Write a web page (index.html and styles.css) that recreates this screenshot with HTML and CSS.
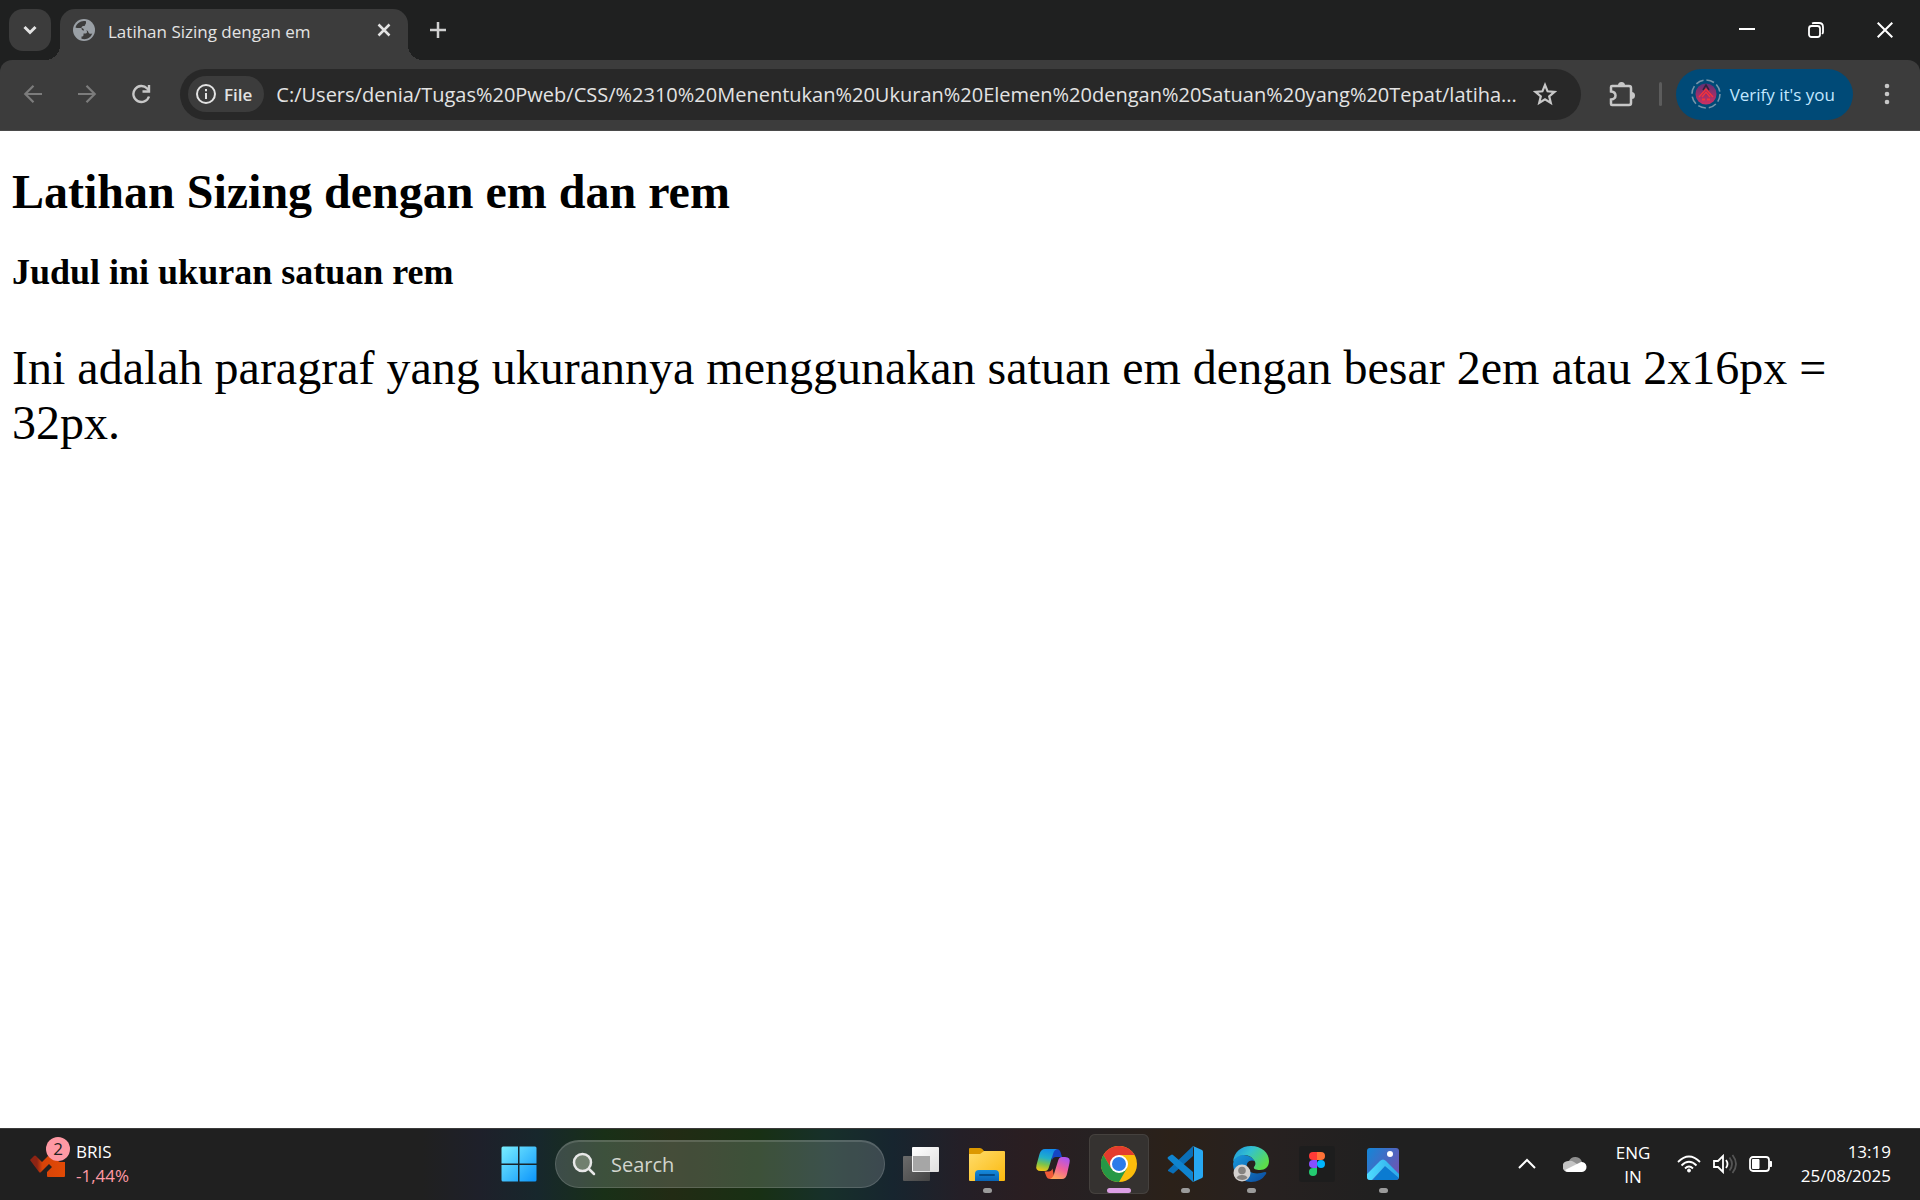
FILE: index.html
```html
<!DOCTYPE html>
<html lang="id">
<head>
<meta charset="utf-8">
<title>Latihan Sizing dengan em</title>
<link rel="stylesheet" href="styles.css">
</head>
<body>
<header class="browser">
  <div class="tabstrip">
    <button class="tab-search" aria-label="Search tabs"><svg width="42" height="42" viewBox="0 0 42 42" fill="none" stroke="#e3e3e3" stroke-width="3"><path d="M15.500 18l5.500 5.500 5.500-5.500"/></svg></button>
    <div class="tab">
      <svg class="tab-icon" width="22" height="22" viewBox="0 0 22 22"><circle cx="11" cy="11" r="11" fill="#9aa0a6"/><path fill="#3c3c3c" d="M13 2.300C8 1 3.500 4.500 2.500 8.500L4 9h4.500c1.500 0 2.500 1 2.500 2.500h1.500c1 0 1.500.5 1.500 1.500s-1 1.500-2 1.500h-1.500v1.500c0 1-1 1.500-2 1.500v2.200c5 1.500 9.500-1 10.800-5.500-1 .8-3.300.8-3.800-.7-.5-1.200-.5-2-2-2h-3c-1.500 0-2-1-2-2.500s1-2 2.500-2 1-2 2-2.500z"/></svg>
      <span class="tab-title">Latihan Sizing dengan em</span>
      <button class="icon-btn tab-close" aria-label="Close tab"><svg width="16" height="16" viewBox="0 0 16 16" stroke="#e3e3e3" stroke-width="2.500"><path d="M2.500 2.500l11 11M13.500 2.500l-11 11"/></svg></button>
    </div>
    <button class="icon-btn new-tab" aria-label="New tab"><svg width="16" height="16" viewBox="0 0 16 16" stroke="#d0d0d0" stroke-width="2.500"><path d="M8 0v16M0 8h16"/></svg></button>
    <div class="window-controls">
      <button class="icon-btn" aria-label="Minimize"><svg width="16" height="16" viewBox="0 0 16 16" stroke="#fff" stroke-width="2"><path d="M0 7h16"/></svg></button>
      <button class="icon-btn" aria-label="Restore"><svg width="16" height="16" viewBox="0 0 16 16" fill="none" stroke="#fff" stroke-width="1.800"><rect x="1" y="4" width="11" height="11" rx="2.500"/><path d="M4 1.500Q5 1 6 1h5q4 0 4 4v5q0 1-.8 2"/></svg></button>
      <button class="icon-btn" aria-label="Close"><svg width="16" height="16" viewBox="0 0 16 16" stroke="#fff" stroke-width="2"><path d="M.7.700l14.600 14.600M15.300.700L.7 15.300"/></svg></button>
    </div>
  </div>
  <div class="toolbar">
    <button class="icon-btn nav" aria-label="Back"><svg width="20" height="20" viewBox="0 0 20 20" fill="none" stroke="#7c7c7c" stroke-width="2.200"><path d="M19 10H3M10.500 1.800L2.300 10l8.200 8.200"/></svg></button>
    <button class="icon-btn nav" aria-label="Forward"><svg width="20" height="20" viewBox="0 0 20 20" fill="none" stroke="#7c7c7c" stroke-width="2.200"><path d="M1 10h16M9.500 1.800l8.200 8.200-8.200 8.200"/></svg></button>
    <button class="icon-btn nav" aria-label="Reload"><svg width="20" height="20" viewBox="0 0 20 20" fill="none" stroke="#c7c7c7" stroke-width="2.400"><path d="M18 12.500A8 8 0 1 1 16.200 4.500L17.500 6"/><path d="M18 1v6.500h-6.500"/></svg></button>
    <div class="omnibox">
      <button class="site-chip"><svg width="20" height="20" viewBox="0 0 20 20" fill="none" stroke="#e3e3e3" stroke-width="2"><circle cx="10" cy="10" r="9"/><path d="M10 9v6M10 5v2.200"/></svg>File</button>
      <input class="url" type="text" aria-label="Address" value="C:/Users/denia/Tugas%20Pweb/CSS/%2310%20Menentukan%20Ukuran%20Elemen%20dengan%20Satuan%20yang%20Tepat/latiha...">
      <button class="icon-btn star" aria-label="Bookmark"><svg width="24" height="24" viewBox="0 0 24 24" fill="none" stroke="#c7c7c7" stroke-width="2.200"><path d="M12 3l2.600 6.300 6.800.6-5.200 4.400 1.600 6.700L12 17.400 6.200 21l1.600-6.700-5.200-4.400 6.800-.6z"/></svg></button>
    </div>
    <button class="icon-btn extensions" aria-label="Extensions"><svg width="26" height="26" viewBox="0 0 26 26"><path d="M3 5h17q2 0 2 2v15q0 2-2 2H3q-1 0-1-1v-4.500q4.500-.5 4.500-4T2 10.500V6q0-1 1-1z" fill="none" stroke="#c7c7c7" stroke-width="2.500"/><path fill="#c7c7c7" d="M9 4.500a3.500 3.500 0 0 1 7 0zM22.500 11a3.500 3.500 0 0 1 0 7z"/></svg></button>
    <span class="divider"></span>
    <button class="profile"><svg width="30" height="30" viewBox="0 0 30 30"><defs><linearGradient id="av" x1="0" y1="0" x2="0" y2="1"><stop offset="0" stop-color="#5f2f74"/><stop offset="1" stop-color="#cc3063"/></linearGradient></defs><circle cx="15" cy="15" r="14" fill="none" stroke="#7495ab" stroke-width="1.600" stroke-dasharray="8 3"/><circle cx="15" cy="15" r="10.500" fill="url(#av)"/><path d="M12 11l3-5 3 5" fill="none" stroke="#30213c" stroke-width="1.500"/><path d="M8 18l7-8 7 8M11 18l4-5 4 5" fill="none" stroke="#f4333b" stroke-width="1.400"/><path d="M11 20.500h3M16 20.500h3" stroke="#f4333b" stroke-width="2"/></svg>Verify it's you</button>
    <button class="icon-btn kebab" aria-label="Menu"><svg width="6" height="22" viewBox="0 0 6 22" fill="#c7c7c7"><circle cx="3" cy="3" r="2.300"/><circle cx="3" cy="11" r="2.300"/><circle cx="3" cy="19" r="2.300"/></svg></button>
  </div>
</header>

<main class="page">
  <h1>Latihan Sizing dengan em dan rem</h1>
  <h2>Judul ini ukuran satuan rem</h2>
  <p>Ini adalah paragraf yang ukurannya menggunakan satuan em dengan besar 2em atau 2x16px = 32px.</p>
</main>

<footer class="taskbar">
  <button class="widget">
    <span class="widget-icon"><svg width="36" height="24" viewBox="0 0 36 24"><defs><linearGradient id="st" x1="0" x2="1"><stop offset="0" stop-color="#8e2414"/><stop offset=".2" stop-color="#8e2414"/><stop offset=".35" stop-color="#d64308"/><stop offset="1" stop-color="#e24a05"/></linearGradient></defs><path fill="url(#st)" d="M0 6l4-4q1-1 2 0l6 6L18 2l12 6h5v14q0 1-1 1H18q-1 0-1-1v-4l5-5-3-3-8 8q-1 1-2 0z"/></svg><span class="badge">2</span></span>
    <span class="widget-text"><span>BRIS</span><span class="loss">-1,44%</span></span>
  </button>

  <nav class="apps" aria-label="Taskbar">
    <button class="app" aria-label="Start"><svg width="36" height="36" viewBox="0 0 36 36"><defs><linearGradient id="wn" gradientUnits="userSpaceOnUse" x1="0" y1="0" x2="36" y2="36"><stop offset="0" stop-color="#7bf0ff"/><stop offset="1" stop-color="#0a93fb"/></linearGradient></defs><path fill="url(#wn)" d="M2 .500h15v17H.5V2Q.5.500 2 .500zM18.500.500H34Q35.500.500 35.500 2v15.500h-17zM.5 19H17v16.500H2Q.5 35.500.5 34zM18.500 19h17v15q0 1.500-1.500 1.500H18.500z"/></svg></button>
    <label class="search"><svg width="24" height="24" viewBox="0 0 24 24" fill="#71806f" stroke="#e8e8e8" stroke-width="2.500" stroke-linecap="round"><circle cx="10.500" cy="10.500" r="8.500"/><path d="M17 17l5 5"/></svg><input type="text" placeholder="Search" aria-label="Search"></label>
    <button class="app" aria-label="Task view"><svg width="36" height="36" viewBox="0 0 36 36"><defs><linearGradient id="t1" x2="1" y2="1"><stop offset="0" stop-color="#fff"/><stop offset="1" stop-color="#dedede"/></linearGradient><linearGradient id="t2" x2="1" y2="1"><stop offset="0" stop-color="#6b6b6b"/><stop offset="1" stop-color="#454545"/></linearGradient></defs><rect y="10" width="27" height="25" rx="1" fill="url(#t2)"/><rect x="9" y="1" width="27" height="25" rx="1" fill="url(#t1)"/><path d="M10 10h17v15H10z" fill="#a6a6a6"/></svg></button>
    <button class="app running" aria-label="File Explorer"><svg width="36" height="36" viewBox="0 0 36 36"><defs><linearGradient id="f1" x2="1" y2="1"><stop offset="0" stop-color="#ffdc6b"/><stop offset="1" stop-color="#fbb90e"/></linearGradient><linearGradient id="f2" x2="0" y2="1"><stop offset="0" stop-color="#168bdb"/><stop offset="1" stop-color="#0963b5"/></linearGradient></defs><path d="M0 3q0-1 1-1h10q2 0 4 3h20v10H0z" fill="#dc9800"/><path d="M0 8h11l4-3h20q1 0 1 1v28q0 1-1 1H1q-1 0-1-1z" fill="url(#f1)"/><path d="M6 35v-7q0-4 4-4h16q4 0 4 4v7z" fill="url(#f2)"/><path d="M11 29h14" stroke="#054b86" stroke-width="2" stroke-linecap="round"/></svg></button>
    <button class="app" aria-label="Copilot"><svg width="36" height="36" viewBox="0 0 36 36"><defs><linearGradient id="c1" x1=".5" x2=".3" y2="1"><stop offset="0" stop-color="#118bea"/><stop offset=".4" stop-color="#22b0c8"/><stop offset=".7" stop-color="#7cc44a"/><stop offset="1" stop-color="#f3c716"/></linearGradient><linearGradient id="c2" x1=".7" x2=".3" y2="1"><stop offset="0" stop-color="#ad55f0"/><stop offset=".5" stop-color="#f0609b"/><stop offset="1" stop-color="#ffa65a"/></linearGradient></defs><path d="M17 3h4.500q3 0 4 3l1.500 5h-6q-3 0-4 3z" fill="#1545c4"/><path d="M10 3h12q-3 1-4 5l-4 13q-1 4-4 4H6q-6 0-4.500-6L4.500 8Q6 3 10 3z" fill="url(#c1)"/><path d="M9.500 25.500h4q3 0 4-3l2 10.500h-4q-3.500 0-4.500-3.500z" fill="#f05a38"/><path d="M27 33H15q3-1 4-5l4-13q1-4 4-4h3q6 0 4.500 6L32 28q-1 5-5 5z" fill="url(#c2)"/></svg></button>
    <button class="app active" aria-label="Chrome"><svg width="36" height="36" viewBox="0 0 36 36"><circle cx="18" cy="18" r="18" fill="#fbbc0b"/><path d="M2.400 9A18 18 0 0 1 33.600 9H18l-7.800 13.500z" fill="#e33b2e"/><path d="M2.400 9A18 18 0 0 0 18 36l7.800-13.500L10.200 22.500z" fill="#269846"/><circle cx="18" cy="18" r="9" fill="#fff"/><circle cx="18" cy="18" r="7" fill="#2c7be9"/></svg></button>
    <button class="app running" aria-label="Visual Studio Code"><svg width="36" height="36" viewBox="0 0 36 36"><path d="M1 24L26 0v10L7 27q-1 1-2 0l-4-2z" fill="#0a6fb8"/><path d="M1 11q-1 1 0 2l25 23V26L6 9q-1-1-2 0z" fill="#0f84cf"/><path d="M26 0l9 4q1 .5 1 2v24q0 1.500-1 2l-9 4q1-1 1-3V3q0-2-1-3z" fill="#27a8f2"/></svg></button>
    <button class="app running" aria-label="Edge"><svg width="36" height="36" viewBox="0 0 36 36"><defs><linearGradient id="e1" x2="1" y2=".6"><stop offset="0" stop-color="#1b8fe0"/><stop offset=".45" stop-color="#34c1cf"/><stop offset="1" stop-color="#5cdd4a"/></linearGradient><linearGradient id="e2" x2="1" y2="1"><stop offset="0" stop-color="#1899dc"/><stop offset="1" stop-color="#0b4a9e"/></linearGradient></defs><path d="M0 18Q1 8 11 9q8 1 11 6c-6-2-9 2-8 6 1 6 9 8 18 5q2 0 1 2-5 8-15 8Q1 35 0 18z" fill="url(#e2)"/><path d="M0 16C1 6 8 0 18 0c11 0 18 7 18 15 0 6-4 9-9 9-4 0-7-1-6-3 3-3 1-7-3-10C12 7 3 9 0 16z" fill="url(#e1)"/><circle cx="9" cy="27" r="8.500" fill="#d3d0ce"/><circle cx="9" cy="24.500" r="3.800" fill="#858280"/><path d="M3.500 32q1-3 5.500-3t5.500 3q-5 4-11 0z" fill="#858280"/></svg></button>
    <button class="app" aria-label="Figma"><svg width="36" height="36" viewBox="0 0 36 36"><rect width="36" height="36" rx="3" fill="#1d1d1d"/><path d="M18 6h-4a4 4 0 0 0 0 8h4z" fill="#ff3a37"/><path d="M18 6h4a4 4 0 0 1 0 8h-4z" fill="#ff7237"/><path d="M18 14h-4a4 4 0 0 0 0 8h4z" fill="#874fff"/><circle cx="22" cy="18" r="4" fill="#00b6ff"/><path d="M18 22h-4a4 4 0 1 0 4 4z" fill="#24cb71"/></svg></button>
    <button class="app running" aria-label="Photos"><svg width="32" height="32" viewBox="0 0 32 32"><defs><linearGradient id="p1" x2="1" y2=".6"><stop offset="0" stop-color="#1287d8"/><stop offset="1" stop-color="#6a56b4"/></linearGradient><linearGradient id="p2" x2="1" y2="0"><stop offset="0" stop-color="#4fdcff"/><stop offset="1" stop-color="#2aa9ea"/></linearGradient></defs><rect width="32" height="32" rx="3" fill="url(#p1)"/><path d="M6 32l12-14 14 12q-1 2-3 2z" fill="#0b7bd1"/><path d="M0 26l13-13q3-3 6 0l13 13v4L18 18 5 32H3q-3 0-3-3z" fill="url(#p2)"/><circle cx="23" cy="6" r="3" fill="#fff"/></svg></button>
  </nav>

  <div class="tray">
    <button class="icon-btn chevron" aria-label="Hidden icons"><svg width="18" height="12" viewBox="0 0 18 12" fill="none" stroke="#fff" stroke-width="2"><path d="M1 10l8-8 8 8"/></svg></button>
    <button class="icon-btn cloud" aria-label="OneDrive"><svg width="24" height="16" viewBox="0 0 24 16"><path d="M6 5a7 7 0 0 1 13 1l-7 4z" fill="#8e8e8e"/><path d="M5 16a5 5 0 0 1 0-11q3-1 6 1l6 4L5 16z" fill="#c4c4c4"/><path d="M2 14l16-8a5 5 0 0 1 1 10H5q-2 0-3-2z" fill="#fff"/></svg></button>
    <button class="lang"><span>ENG</span><span>IN</span></button>
    <button class="status" aria-label="Network, volume, battery">
      <svg width="24" height="18" viewBox="0 0 24 18" fill="none" stroke="#fff" stroke-width="1.800"><path d="M1 7q11-11 22 0M4.500 10.500q7.500-7.500 15 0M8 13.500q4-4 8 0"/><circle cx="12" cy="15.500" r="1.500" fill="#fff" stroke-width="1"/></svg>
      <svg width="24" height="20" viewBox="0 0 24 20" fill="none" stroke="#fff" stroke-width="1.800"><path d="M1 7h4l5-5v16l-5-5H1zM13 6q3 4 0 8"/><path d="M16.500 3.500q5 6.500 0 13M19.500 1q7 9 0 18" stroke="#555"/></svg>
      <svg width="24" height="16" viewBox="0 0 24 16" fill="none" stroke="#fff" stroke-width="1.800"><rect x="1" y="1" width="19" height="14" rx="3"/><path d="M3.500 3.500H10v9H3.500zM21 5.500h1.500v5H21z" fill="#fff" stroke-width="1"/></svg>
    </button>
    <button class="clock"><span>13:19</span><span>25/08/2025</span></button>
  </div>
</footer>
</body>
</html>
```
FILE: styles.css
```css
* { box-sizing: border-box; }

body {
  margin: 0;
  min-height: 100vh;
  display: flex;
  flex-direction: column;
  background: #fff;
  font-family: "Open Sans", "Noto Sans", sans-serif;
}

button, input {
  margin: 0;
  padding: 0;
  border: 0;
  background: none;
  color: inherit;
  font: inherit;
  outline: none;
}

svg { display: block; flex: none; }

.icon-btn {
  display: flex;
  align-items: center;
  justify-content: center;
}

/* Browser window */
.browser { background: #1f2020; color: #e3e3e3; }

.tabstrip {
  display: flex;
  height: 60px;
  padding-left: 9px;
}

.tab-search {
  width: 42px;
  height: 42px;
  margin-top: 9px;
  border-radius: 14px;
  background: #3c3c3c;
}

.tab {
  position: relative;
  display: flex;
  align-items: center;
  width: 348px;
  margin: 9px 0 0 9px;
  padding: 0 16px 9px 13px;
  border-radius: 15px 15px 0 0;
  background: #3c3c3c;
  font-size: 17px;
}

/* Concave feet that join the tab to the toolbar */
.tab::before,
.tab::after {
  content: "";
  position: absolute;
  bottom: 0;
  width: 15px;
  height: 15px;
}
.tab::before { right: 100%; background: radial-gradient(circle at 0 0, transparent 15px, #3c3c3c 15px); }
.tab::after { left: 100%; background: radial-gradient(circle at 100% 0, transparent 15px, #3c3c3c 15px); }

.tab-title { flex: 1; margin-left: 13px; padding-top: 3px; }
.tab-close { width: 16px; }
.new-tab { width: 42px; height: 42px; margin: 9px 0 0 9px; }

.window-controls { display: flex; margin-left: auto; padding-right: 1px; }
.window-controls .icon-btn { width: 69px; height: 60px; }

.toolbar {
  display: flex;
  align-items: center;
  height: 71px;
  padding: 0 12px 2px 6px;
  border-bottom: 1px solid #4a4a4a;
  border-radius: 12px 12px 0 0;
  background: #3c3c3c;
}

.nav { width: 54px; height: 51px; }

.omnibox {
  flex: 1;
  display: flex;
  align-items: center;
  height: 51px;
  margin-left: 12px;
  padding: 0 22px 0 8px;
  border-radius: 26px;
  background: #282828;
}

.site-chip {
  display: flex;
  align-items: center;
  gap: 8px;
  height: 36px;
  padding: 0 12px 0 8px;
  border-radius: 18px;
  background: #3c3c3c;
  font-size: 17px;
  font-weight: 600;
}

.url {
  flex: 1;
  min-width: 0;
  height: 36px;
  margin-left: 12px;
  font-size: 20px;
}

.star { width: 28px; }
.extensions { width: 26px; margin-left: 28px; }

.divider {
  width: 3px;
  height: 24px;
  margin: 0 14px 0 24px;
  border-radius: 2px;
  background: #5c5c5c;
}

.profile {
  display: flex;
  align-items: center;
  gap: 9px;
  height: 51px;
  padding: 0 18px 0 15px;
  border-radius: 26px;
  background: #004a77;
  color: #c2e7ff;
  font-size: 17px;
}

.kebab { width: 42px; margin-left: 13px; }

/* Document */
.page {
  flex: 1;
  padding: 0 12px;
  color: #000;
  font-family: "Liberation Serif", serif;
}

.page h1 { margin: 33px 0 32px; font-size: 48px; line-height: 56px; }
.page h2 { margin: 0 0 48px; font-size: 36px; line-height: 40px; }
.page p { margin: 0; font-size: 48px; line-height: 55px; }

/* Taskbar */
.taskbar {
  display: grid;
  grid-template-columns: 1fr auto 1fr;
  align-items: center;
  height: 72px;
  padding-bottom: 2px;
  border-top: 1px solid #3a3a3a;
  background: linear-gradient(90deg, #202020 0, #202020 22%, #1e202a 25%, #17272c 28%, #193017 31.500%, #222b14 35%, #183014 39.500%, #17302a 43%, #17252f 46.500%, #241f27 50%, #2a1e21 53.500%, #262122 57%, #2b2119 61%, #272120 66%, #202020 72%, #202020 100%);
  color: #fff;
  font-size: 17px;
}

.widget {
  display: flex;
  align-items: center;
  gap: 10px;
  padding-left: 30px;
  text-align: left;
}

.widget-icon { position: relative; padding-top: 5px; }

.badge {
  position: absolute;
  right: -4px;
  top: -12px;
  width: 24px;
  height: 24px;
  border-radius: 50%;
  background: #ff99a4;
  color: #222;
  text-align: center;
  line-height: 24px;
}

.widget-text, .lang, .clock {
  display: flex;
  flex-direction: column;
  line-height: 24px;
}
.loss { color: #ff99a4; }

.apps { display: flex; align-items: center; padding-right: 18px; }

.app {
  position: relative;
  display: flex;
  align-items: center;
  justify-content: center;
  width: 60px;
  height: 60px;
  margin: 0 3px;
  border-radius: 6px;
}

.app.active {
  background: #353230;
  box-shadow: inset 0 0 0 1px #45413e;
}

.app.running::after,
.app.active::after {
  content: "";
  position: absolute;
  bottom: 1px;
  width: 9px;
  height: 5px;
  border-radius: 3px;
  background: #9b9b9b;
}
.app.active::after { width: 24px; background: #dc9fe4; }

.search {
  display: flex;
  align-items: center;
  gap: 15px;
  width: 330px;
  height: 48px;
  margin: 0 3px;
  padding: 0 18px 0 16px;
  border: 1px solid rgba(255, 255, 255, .14);
  border-top-width: 2px;
  border-radius: 24px;
  background: rgba(255, 255, 255, .16);
}
.search input { flex: 1; min-width: 0; font-size: 20px; }
.search input::placeholder { color: #d2d5ce; opacity: 1; }

.tray {
  display: flex;
  align-items: center;
  justify-content: flex-end;
  padding-right: 29px;
}
.chevron { width: 18px; margin-right: 27px; }
.cloud { width: 24px; margin-right: 28px; }
.lang { align-items: center; width: 36px; margin-right: 26px; padding-top: 2px; }
.status { display: flex; align-items: center; gap: 12px; }
.clock { align-items: flex-end; width: 94px; margin-left: 24px; }
```
